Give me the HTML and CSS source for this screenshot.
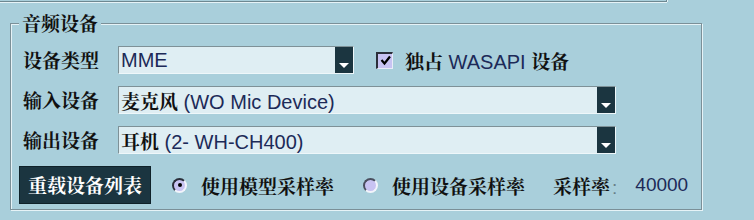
FILE: index.html
```html
<!DOCTYPE html>
<html lang="zh-CN">
<head>
<meta charset="utf-8">
<title>音频设备</title>
<link rel="stylesheet" href="styles.css">
</head>
<body>
<div class="top-frame"></div>
<fieldset class="group">
  <legend class="group-title">音频设备</legend>
  <div class="row">
    <span class="label">设备类型</span>
    <div class="combo combo-short">
      <span class="value">MME</span>
      <span class="arrow"><svg width="18" height="26" viewBox="0 0 18 26"><polygon points="4,16 14,16 9,21" fill="#ffffff"/></svg></span>
    </div>
    <label class="check">
      <span class="check-box"><svg width="13" height="13" viewBox="0 0 13 13"><polyline points="2.5,6 5.5,9.5 11,2.5" fill="none" stroke="#000" stroke-width="2.2"/></svg></span>
      <span class="check-text"><b class="zh">独占</b> WASAPI <b class="zh">设备</b></span>
    </label>
  </div>
  <div class="row">
    <span class="label">输入设备</span>
    <div class="combo combo-long">
      <span class="value"><b class="zh">麦克风</b> (WO Mic Device)</span>
      <span class="arrow"><svg width="18" height="26" viewBox="0 0 18 26"><polygon points="4,16 14,16 9,21" fill="#ffffff"/></svg></span>
    </div>
  </div>
  <div class="row">
    <span class="label">输出设备</span>
    <div class="combo combo-long">
      <span class="value"><b class="zh">耳机</b> (2- WH-CH400)</span>
      <span class="arrow"><svg width="18" height="26" viewBox="0 0 18 26"><polygon points="4,16 14,16 9,21" fill="#ffffff"/></svg></span>
    </div>
  </div>
  <div class="row actions">
    <button class="btn" type="button">重载设备列表</button>
    <label class="radio radio-on"><span class="radio-dot"></span><span class="radio-text">使用模型采样率</span></label>
    <label class="radio radio-off"><span class="radio-dot"></span><span class="radio-text">使用设备采样率</span></label>
    <span class="rate-label">采样率<span class="colon">:</span></span>
    <span class="rate-value">40000</span>
  </div>
</fieldset>
</body>
</html>
```

FILE: styles.css
```css
html, body {
  margin: 0;
  padding: 0;
}
body {
  background: #a9cfdb;
  width: 754px;
  height: 220px;
  overflow: hidden;
  padding-left: 10px;
  box-sizing: border-box;
  font-family: "Liberation Sans", "Noto Serif CJK SC", "Noto Sans CJK SC", sans-serif;
  color: #111;
}
.zh, .label, .group-title, .btn, .radio-text, .rate-label {
  font-family: "Noto Serif CJK SC", "Noto Sans CJK SC", serif;
  font-weight: 700;
}
.top-frame {
  margin-left: -10px;
  width: 666px;
  height: 1px;
  border-bottom: 1px solid #6e8891;
  border-right: 1px solid #6e8891;
  box-shadow: 0 1px 0 #e6f3f7, 1px 0 0 #e6f3f7;
}
.group {
  margin: 10px 0 0 0;
  width: 692px;
  box-sizing: border-box;
  border: 1px solid #7b9098;
  box-shadow: inset 1px 1px 0 #e6f3f7, 1px 1px 0 #e6f3f7;
  padding: 12px 10px 5px 11px;
  min-width: 0;
}
.group-title {
  font-size: 19px;
  line-height: 22px;
  padding: 0 3px;
  margin-left: -3px;
  background: #a9cfdb;
  color: #111;
}
.row {
  display: flex;
  align-items: center;
  height: 28px;
  margin-bottom: 12px;
}
.label {
  width: 95px;
  flex: none;
  font-size: 19px;
  line-height: 28px;
  margin-left: 1px;
}
.combo {
  position: relative;
  display: flex;
  align-items: center;
  height: 28px;
  box-sizing: border-box;
  background: #dfeef3;
  border-top: 1px solid #7e9197;
  border-left: 1px solid #7e9197;
  border-right: 1px solid #eef7fa;
  border-bottom: 1px solid #eef7fa;
  flex: none;
}
.combo-short { width: 236px; }
.combo-long { width: 498px; }
.value {
  flex: 1;
  padding-left: 2px;
  font-size: 20px;
  color: #1c2a58;
  white-space: nowrap;
}
.value .zh {
  color: #111;
  font-size: 19px;
}
.arrow {
  width: 18px;
  height: 26px;
  background: #1b3540;
  flex: none;
  display: block;
}
.arrow svg { display: block; }
.check {
  display: flex;
  align-items: center;
  margin-left: 22px;
}
.check-box {
  width: 17px;
  height: 17px;
  box-sizing: border-box;
  background: #c8c3f2;
  border-top: 2px solid #2b2f3a;
  border-left: 2px solid #2b2f3a;
  border-right: 1px solid #e8ecf8;
  border-bottom: 1px solid #e8ecf8;
  display: flex;
  align-items: center;
  justify-content: center;
}
.check-box svg { display: block; }
.check-text {
  margin-left: 12px;
  font-size: 20px;
  color: #1c2a58;
  white-space: nowrap;
}
.check-text .zh { color: #111; font-size: 19px; }
.actions {
  height: 38px;
  margin-bottom: 0;
  margin-left: -3px;
}
.btn {
  height: 38px;
  width: 132px;
  padding: 0;
  border: 1px solid #0f2229;
  background: #1b3540;
  color: #ffffff;
  font-size: 19px;
  line-height: 36px;
  flex: none;
}
.radio {
  display: flex;
  align-items: center;
}
.radio-on { margin-left: 21px; }
.radio-off { margin-left: 29px; }
.radio-dot {
  position: relative;
  width: 15px;
  height: 15px;
  box-sizing: border-box;
  border-radius: 50%;
  background: #c8c3f2;
  border: 2px solid #f2f4fb;
  border-top-color: #2a2e3a;
  border-left-color: #2a2e3a;
  flex: none;
}
.radio-off .radio-dot {
  border-top-color: #4a4e5e;
  border-left-color: #4a4e5e;
}
.radio-on .radio-dot::after {
  content: "";
  position: absolute;
  left: 3.5px;
  top: 3.5px;
  width: 4px;
  height: 4px;
  border-radius: 50%;
  background: #000;
}
.radio-text {
  margin-left: 14px;
  font-size: 19px;
  white-space: nowrap;
}
.rate-label {
  margin-left: 28px;
  font-size: 19px;
  white-space: nowrap;
}
.colon {
  font-family: "Liberation Sans", sans-serif;
  font-weight: 400;
  color: #6a7f88;
  margin-left: 2px;
}
.rate-value {
  margin-left: 18px;
  font-size: 19px;
  color: #1c2a58;
}
```
